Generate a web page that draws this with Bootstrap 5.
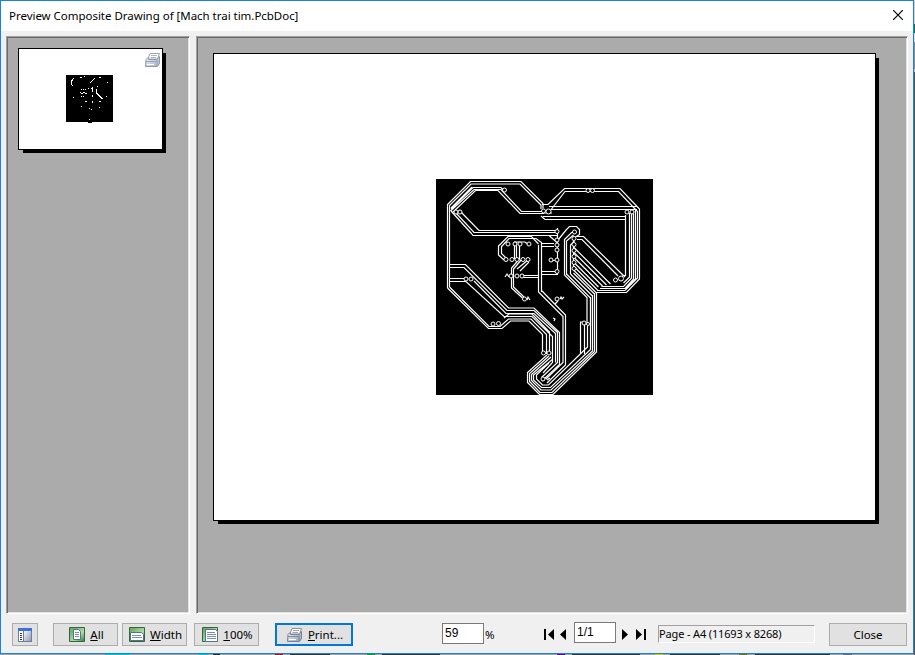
<!DOCTYPE html>
<html lang="en">
<head>
<meta charset="utf-8">
<title>Preview Composite Drawing</title>
<link href="https://cdn.jsdelivr.net/npm/bootstrap@5.3.0/dist/css/bootstrap.min.css" rel="stylesheet">
<style>
html{background:#999}
body{font:11.5px "Noto Sans","Open Sans",sans-serif;color:#000;width:915px;height:655px;overflow:hidden;
background:
linear-gradient(90deg,#a0a0a0 105px,#00c8d0 105px 130px,#a0a0a0 130px 198px,#00c8d0 198px 208px,#a0a0a0 208px 213px,#222 213px 220px,#a0a0a0 220px 275px,#c00010 275px 283px,#a0a0a0 283px 290px,#333 290px 330px,#a0a0a0 330px 367px,#009a18 367px 375px,#a0a0a0 375px 382px,#333 382px 440px,#a0a0a0 440px 557px,#700078 557px 565px,#a0a0a0 565px 572px,#333 572px 640px,#a0a0a0 640px 655px,#d8d000 655px 663px,#a0a0a0 663px 670px,#333 670px 720px,#a0a0a0 720px 739px,#707000 739px 747px,#a0a0a0 747px 755px,#333 755px 830px,#a0a0a0 830px 843px,#667 843px 852px,#a0a0a0 852px) 0 654px/914px 1px no-repeat,
linear-gradient(#d0d0d4 24px,#007a5c 24px 33px,#d8dcd8 33px 42px,#8a8a92 42px 69px,#c0c0c4 69px 72px,#555 72px) 914px 0/1px 655px no-repeat}
svg{display:block;flex:none}
.window{width:914px;height:654px;background:#f0f0f0;border:1px solid #1883d7}
.titlebar{height:30px;background:#fff;padding:0 10px 2px 8px;flex:none}
.caption{letter-spacing:-.03px;white-space:pre}
.panes{height:578px;margin-top:5px;padding:0 5px;gap:6px;flex:none}
.pane{background:#ababab;border:1px solid;border-color:#a0a0a0 #fff #fff #a0a0a0;box-shadow:inset 1px 1px #696969,inset -1px -1px #e3e3e3}
.pane-pages{width:184px;padding:11px}
.pane-view{width:712px;padding:16px}
.sheet{background:#fff;border:1px solid #000}
.sheet-thumb{width:145px;height:102px;box-shadow:3px 3px 0 0 #000;clip-path:polygon(0 0,145px 0,145px 5px,148px 5px,148px 105px,5px 105px,5px 102px,0 102px)}
.sheet-main{width:663px;height:468px;box-shadow:3px 3px 0 0 #000;clip-path:polygon(0 0,663px 0,663px 5px,666px 5px,666px 471px,5px 471px,5px 468px,0 468px)}
.sheet-thumb .board{margin:26px 0 0 47px}
.sheet-main .board{margin:125px 0 0 222px}
.sheet-thumb .printmark{margin:3px 0 0 32px}
.tracks path{stroke-width:1.2}
.toolbar{height:39px;padding:9px 6px 0 11px;flex:none}
.tool{height:23px;border:1px solid #adadad;border-radius:0;background:#e1e1e1;padding:0;font-size:11.5px;line-height:1;color:#000;display:flex;align-items:center;justify-content:center;gap:5px}
.tool.primary-action{border:2px solid #0078d7}
.w-view{width:26px;margin-right:15px}.w-fit{width:65px;padding-left:2px}.w-print{width:78px;padding-left:2px}.w-close{width:78px}
.gap-width{margin-left:4px}.gap-actual{margin-left:7px}.gap-print{margin-left:16px}.gap-close{margin-left:14px}
.field{height:21px;width:42px;border:1px solid #7a7a7a;background:#fff;border-radius:0;padding:0 3px 2px 2px;font:12px/17px "Liberation Sans",Arial,sans-serif;color:#000;outline:0}
.field-zoom{margin-left:89px}
.field-page{margin:-1px 0 0 6px}
.percent{margin:4px 0 0 1px;width:11px}
.nav-prev{margin:6px 0 0 48px}
.nav-next{margin:6px 0 0 6px}
.pageinfo{width:157px;height:18px;line-height:16px;padding-left:0;border:1px solid;border-color:#a0a0a0 #fff #fff #a0a0a0;white-space:nowrap;font-size:11px;letter-spacing:-.15px;margin-top:2px}
</style>
</head>
<body>
<svg width="0" height="0" style="position:absolute" aria-hidden="true">
<defs>
<linearGradient id="gg" x1="0" y1="0" x2="1" y2="1"><stop offset="0" stop-color="#5f9e5b"/><stop offset=".35" stop-color="#8cc183"/><stop offset=".6" stop-color="#b5d8aa"/><stop offset="1" stop-color="#2f7a35"/></linearGradient>
<linearGradient id="gp" x1="0" y1="0" x2="1" y2="1"><stop offset="0" stop-color="#f4f6fb"/><stop offset="1" stop-color="#8d9cb5"/></linearGradient>
<symbol id="printer" viewBox="0 0 16 15"><path d="M5 1.500h9.500L12.500 7H3z" fill="#fff" stroke="#8a8f98"/><path d="M6 3.500h6M5.500 5.500h5.500" stroke="#a0a4ad"/><path d="M1 7.500 3 5.500l.5 2H12l2.500-3v7l-2 3H.5z" fill="url(#gp)" stroke="#76829a"/><path d="M12 7.500V14M1 9.500h11" stroke="#7e8aa2"/><path d="M2 12.500h7" stroke="#fff"/></symbol>
</defs>
</svg>
<div class="window d-flex flex-column">
  <header class="titlebar d-flex align-items-center justify-content-between">
    <div class="caption">Preview Composite Drawing of [Mach trai tim.PcbDoc]</div>
    <svg width="10" height="10" viewBox="0 0 10 10"><path d="M0 0l10 10M10 0L0 10" stroke="#000" stroke-width="1.200"/></svg>
  </header>
  <main class="panes d-flex">
    <aside class="pane pane-pages">
      <div class="sheet sheet-thumb d-flex align-items-start">
        <svg class="board" width="47" height="48" viewBox="0 0 47 48" shape-rendering="crispEdges"><path d="M0 0h47v47H26v1h-4v-1H0z"/><path d="M8 3l-3 4v2l2 2M14 2.500h2M18 1.500h1M29 3l-5 5M33 2.500h2M41 7.500h1M15 14.500h1m1 0h1m1 0h1m2-1h1m2 0h1M26.500 12v5m0 3v2m0 4v2M30.500 14v4l6 6M31 11.500h1M14 17.500h1m2 0h2M15 18.500h2m2 0h2M15 21.500h1m1 0h1M7 22.500h1M40 21.500h1M19 26.500h2m12 0h2M15 31.500h1M23 33.500h1m1 1h1M33 32.500h1M23 44.500h1" fill="none" stroke="#fff"/></svg>
        <svg class="printmark" width="16" height="15"><use href="#printer" opacity=".8"/></svg>
      </div>
    </aside>
    <section class="pane pane-view">
      <div class="sheet sheet-main d-flex align-items-start">
        <svg class="board" width="217" height="216" viewBox="436 179 217 216">
          <path d="M436 179h217v216H436z"/>
          <g class="tracks" fill="none" stroke="#fff">
            <!-- upper left tracks -->
            <path d="M447.500 288V204.500l23-23h50.500l22 22v5M449.500 287V205.500l21.500-21.500h49l21 21v4M451 209l22-21.500h28l4 4M450.500 211l23.500-21.500h27l20.500 22h21.500M452 213l23.500-22.500H498l22 23h24M451 208l21-21M451 211l20 22 2 2.500h84M459 210l20 20.500h77M456 213l18 19.500h82"/>
            <!-- upper right tracks -->
            <path d="M542 204.500h6l16.500-16H620l19.500 20.500v70L626.500 292.500H597M550 211l15-19.500H618.500l19 20V278l-12.500 12.500h-28M549 206.500h88M551 209.500h86M543 216.500h82M541 216l4 3.500h80M625.500 215v60.500h-3M629.500 213v64l-6 6M631.500 213v65l-8 8.500h-22M633.500 211v68l-8.500 9.500H600M635.500 210v69l-10 10"/>
            <path d="M558 240l8.500-10.500 3-3h7l3 3v5l-3 2h7L625 277M577 239.500h5L618 276M564.500 275V239.500l7-7h5M566.500 275V241l7-6M570.500 274V245l4-4M564.500 275l22.500 22.500V324M566.500 274l24 24v28M570.500 274l22 22M573.500 273l21 21M573.500 270l23 23M573.500 266l24 24M573.500 262l25 25M573.500 257l29 29M573.500 252l33 33M573.500 247l37 37"/>
            <!-- left and lower tracks -->
            <path d="M450 264.500h15.500l43 43.500H534l25.500 24.500v32L542 381M450 267.500h14L507 310.500h27l23.500 22v30l-16 15M450 278.500h16M450 281.500h16l38 35h28l20.500 20v26L543 373M474 281l32 32.500h28l21.500 20v29M447.500 288l41 40.500H502l8.500-7.500H529l13.500 13.500V353M449.500 287l39.500 39.500h11L508.500 319H531l15.500 15.500V354M504 318l5-4h23l17.500 18v22"/>
            <path d="M547 355l-19.500 17.500v10L539.500 394.500H553l43.500-42.500V292M549 356l-19.500 17.500v8l10.500 11h12l42.500-41V293M551 357l-19.500 17.500v6l9.500 9.500h10l41.500-39V295M553 359l-19.500 16v5l8 7.500h9l40-38V297M549 363l-12.500 12v4l6 6h6l39-38V326M580.500 354V322h4M584.500 354V323M542 291l23.500 24v50L547 383M538.500 245v47l24.500 24.500v46L546 379"/>
            <!-- centre network -->
            <path d="M538.500 244l-7-7.500H508l-9.500 9.500v9L504 260M541.500 292V242.500l-5.500-4h-27l-7.500 8v7l5 5M514.500 244v15M516.500 242v16M519.500 244v15l-8 9v20l11 10M522 259l-8.500 10v18l10.500 10M517 269l11-9M520 271l9-9M514 242h11l4 3M541 243.500h13M541 246.500h13M541 271.500h17M541 274.500h17M522 275.500h16.500M522 277.500h16.500M550 260.500h8M557.500 228v46M573.500 236v34M544 213h8M549 235.500l8 7"/>
            <g fill="#000"><circle cx="504.500" cy="190" r="2"/><circle cx="456" cy="212" r="2"/><circle cx="460" cy="212" r="2"/><circle cx="588" cy="190.500" r="2"/><circle cx="592.500" cy="190.500" r="2"/><circle cx="548.500" cy="211.500" r="2.500"/><circle cx="543.500" cy="211" r="2"/><circle cx="627" cy="212" r="2"/><circle cx="632" cy="212" r="2"/><circle cx="466" cy="279" r="2"/><circle cx="471" cy="279" r="2"/><circle cx="615.500" cy="280" r="2"/><circle cx="621" cy="278.500" r="2.500"/><circle cx="493" cy="324" r="2"/><circle cx="498.500" cy="323.500" r="2"/><circle cx="508" cy="244" r="2"/><circle cx="515" cy="244" r="2"/><circle cx="520" cy="244" r="2"/><circle cx="529" cy="244" r="2"/><circle cx="506" cy="259.500" r="2"/><circle cx="512" cy="259.500" r="2"/><circle cx="517" cy="259.500" r="2"/><circle cx="523" cy="259.500" r="2"/><circle cx="528" cy="259.500" r="2"/><circle cx="511" cy="276" r="2"/><circle cx="517" cy="276" r="2"/><circle cx="522" cy="276" r="2"/><circle cx="524.500" cy="299" r="2"/><circle cx="557" cy="299" r="2"/><circle cx="584" cy="323" r="2"/><circle cx="588" cy="324" r="1.500"/><circle cx="543" cy="379" r="2"/><circle cx="543.500" cy="353" r="2"/><circle cx="549" cy="353" r="2"/><circle cx="557" cy="231.500" r="2"/><circle cx="557" cy="240" r="2"/><circle cx="557" cy="245" r="2"/><circle cx="557" cy="250" r="2"/><circle cx="551" cy="260" r="2"/><circle cx="557" cy="260" r="2"/><circle cx="557" cy="271.500" r="2"/><circle cx="574.500" cy="232" r="2"/><circle cx="574" cy="238.500" r="2"/><circle cx="574" cy="244.500" r="2"/><circle cx="574" cy="250.500" r="2"/><circle cx="574" cy="256.500" r="2"/><circle cx="574" cy="262.500" r="2"/><circle cx="574" cy="268.500" r="2"/></g>
            <path d="M505 277l2-3 2 3M527 300l1-3 2 3M560 299l1-2 1 2 2-2M555 304l3-3M553 318l2 1-1 2M547 380l3-2"/>
          </g>
        </svg>
      </div>
    </section>
  </main>
  <footer class="toolbar d-flex align-items-start">
    <button class="tool w-view" aria-label="Toggle pages"><svg width="14" height="14" viewBox="0 0 14 14"><path d="M0 0h14v14H0z" fill="#6b7c9c"/><path d="M0 0h14v3H0z" fill="#3c6fe0"/><path d="M1 3h4v10H1z" fill="#fff"/><path d="M6 3h7v10H6z" fill="url(#gp)"/><path d="M2 5.500h2m-2 2h2m-2 2h2m-2 2h2" stroke="#333"/></svg></button>
    <button class="tool w-fit"><svg width="16" height="15" viewBox="0 0 16 15"><path d="M.5.5h15v14H.5z" fill="url(#gg)" stroke="#2e6b38"/><path d="M4.500 2.500h5l2 2v8h-7z" fill="#fff" stroke="#57708f"/><path d="M6 5.500h4m-4 2h4m-4 2h4" stroke="#7b8eb0"/></svg><span><u>A</u>ll</span></button>
    <button class="tool w-fit gap-width"><svg width="16" height="15" viewBox="0 0 16 15"><path d="M.5.5h15v14H.5z" fill="url(#gg)" stroke="#2e6b38"/><path d="M1.500 5.500h11l2 2v6h-13z" fill="#fff" stroke="#57708f"/><path d="M3 8.500h9m-9 2h10" stroke="#7b8eb0"/></svg><span><u>W</u>idth</span></button>
    <button class="tool w-fit gap-actual"><svg width="16" height="15" viewBox="0 0 16 15"><path d="M.5.5h15v14H.5z" fill="url(#gg)" stroke="#2e6b38"/><path d="M3.500 2.500h10l2 2v10h-12z" fill="#fff" stroke="#57708f"/><path d="M5 5.500h8m-8 2h9m-9 2h9m-9 2h9" stroke="#7b8eb0"/></svg><span><u>1</u>00%</span></button>
    <button class="tool primary-action w-print gap-print"><svg width="16" height="15"><use href="#printer"/></svg><span><u>P</u>rint...</span></button>
    <input class="field field-zoom" value="59" aria-label="Zoom">
    <span class="percent">%</span>
    <svg class="nav-prev" width="24" height="11" viewBox="0 0 24 11"><path d="M0 0h2v11H0zM10 0v11L4 5.500zM22 0v11L16 5.500z"/></svg>
    <input class="field field-page" value="1/1" aria-label="Page">
    <svg class="nav-next" width="24" height="11" viewBox="0 0 24 11"><path d="M0 0v11l6-5.500zM14 0v11l6-5.500zM22 0h2v11h-2z"/></svg>
    <div class="pageinfo ms-auto">Page - A4 (11693 x 8268)</div>
    <button class="tool w-close gap-close">Close</button>
  </footer>
</div>
</body>
</html>
